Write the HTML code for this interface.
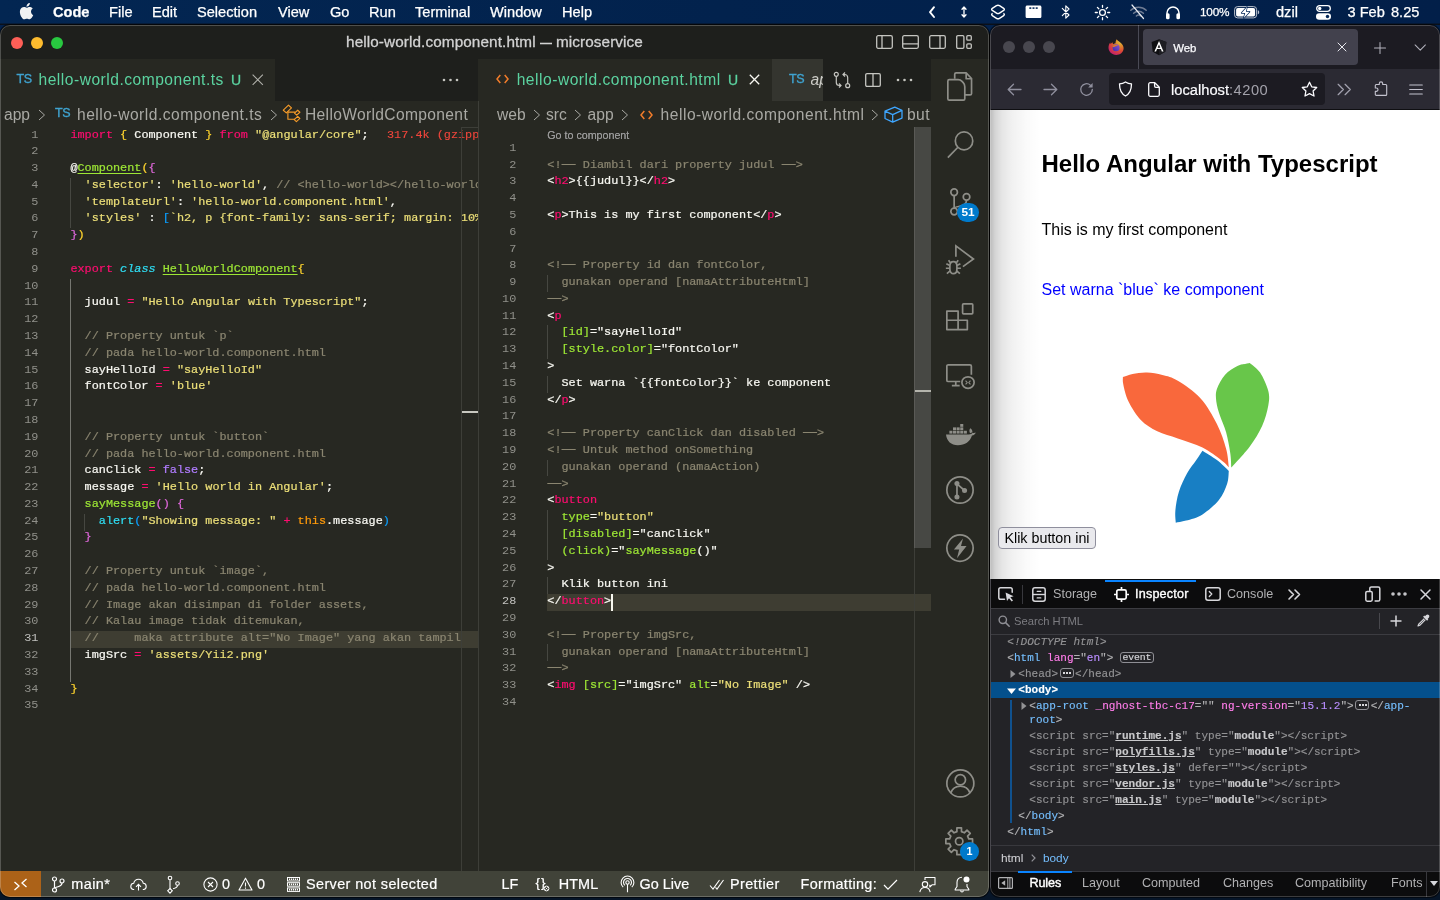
<!DOCTYPE html>
<html lang="en">
<head>
<meta charset="utf-8">
<title>hello-world.component.html — microservice</title>
<style>
*{box-sizing:border-box}
html,body{margin:0;padding:0}
body{width:1440px;height:900px;overflow:hidden;position:relative;background:#061528;font-family:"Liberation Sans",sans-serif;color:#fff}
.abs{position:absolute}
#menubar,#vsc,#ff{will-change:transform}
svg{display:block;overflow:visible}
/* ---------- menubar ---------- */
#menubar{position:absolute;left:0;top:0;width:1440px;height:25px;background:linear-gradient(rgba(0,0,0,0) 0,rgba(0,0,0,0) 23px,rgba(10,12,18,.8) 24px,#0d0f14 25px),linear-gradient(90deg,#032652 0,#02224d 50%,#021f49 100%)}
#menubar .mi{position:absolute;top:0;height:24px;line-height:24px;font-size:14.6px;color:#fff;white-space:pre;-webkit-text-stroke:.25px}
#menubar .mi.b{font-weight:700}
/* ---------- vscode ---------- */
#vsc{position:absolute;left:0;top:25px;width:989px;height:871.500px;background:#272822;border-radius:10px;overflow:hidden;box-shadow:0 0 0 1px rgba(0,0,0,.6)}
#vsc .frame{position:absolute;inset:0;border-radius:10px;border:1px solid rgba(255,255,255,.22);pointer-events:none;z-index:50}
#titlebar{position:absolute;left:0;top:0;width:989px;height:34px;background:#1e1f1c}
#titlebar .tl{position:absolute;top:12px;width:12px;height:12px;border-radius:50%}
#titlebar .title{position:absolute;left:0;width:989px;top:0;height:34px;line-height:34px;text-align:center;font-size:15.3px;color:#d2d2d2;white-space:pre;letter-spacing:.1px;-webkit-text-stroke:.3px}
.tabs{position:absolute;top:34px;height:42px;background:#1e1f1c;overflow:hidden}
.tab{position:absolute;top:0;height:42px;background:#272822}
.tab.inact{background:#34352f}
.tlabel{position:absolute;top:0;height:42px;line-height:42px;font-size:15.6px;letter-spacing:.5px;white-space:pre;color:#5bd3a0}
.bc{position:absolute;top:76px;height:25px;background:#272822;overflow:hidden}
.bc span{position:absolute;top:0;height:26px;line-height:27px;font-size:15.6px;color:#a9a9a4;white-space:pre}
.ed{position:absolute;top:0;background:#272822;overflow:hidden;font-family:"Liberation Mono",monospace;font-size:11.83px}
.ln{position:absolute;left:0;height:16.79px;line-height:16.79px;text-align:right;color:#90908a;white-space:pre}
.ln.act{color:#c2c2bf}
.cl{position:absolute;height:16.79px;line-height:16.79px;white-space:pre;color:#f8f8f2;-webkit-text-stroke:.22px}
.k{color:#fc0d6f}.s{color:#ecdf78}.c{color:#8a8570}.g{color:#9de635}.b{color:#2fdcf2}.p{color:#b07cff}.o{color:#ff9a0a}
.i{font-style:italic}.u{text-decoration:underline;text-underline-offset:2px}
.by{color:#ffd42e}.bp{color:#e068dc}.bb{color:#0a9fff}
.ic{color:#f2463c;margin-left:18.4px;-webkit-text-stroke:.1px}
.lg{color:transparent;-webkit-text-stroke:0;text-decoration:line-through;text-decoration-color:#8a8570;text-decoration-thickness:1.300px}
.guide{position:absolute;width:1px;background:#464741}
.hl{position:absolute;height:16.79px;background:#3e3d32}
/* ---------- status bar ---------- */
#status{position:absolute;left:0;top:846px;width:989px;height:27px;background:#414339}
#status span{position:absolute;top:0;height:26px;line-height:26px;font-size:15.6px;color:#fff;white-space:pre;-webkit-text-stroke:.2px}
/* ---------- firefox ---------- */
#ff{position:absolute;left:990px;top:25px;width:450px;height:871.500px;background:#1c1b22;border-radius:10px;overflow:hidden;box-shadow:0 0 0 1px rgba(0,0,0,.55)}
#ffi{position:absolute;left:1px;top:0;width:450px;height:876px}
#ff .frame{position:absolute;inset:0;border-radius:10px;border:1px solid rgba(255,255,255,.2);pointer-events:none;z-index:50}
</style>
</head>
<body>
<!-- ================= MENUBAR ================= -->
<div id="menubar">
<svg class="abs" style="left:19.500px;top:2.600px" width="13.500" height="16.300" viewBox="3 0 18.6 24"><path fill="#f2f2f2" d="M12.152 6.896c-.948 0-2.415-1.078-3.96-1.04-2.04.027-3.91 1.183-4.961 3.014-2.117 3.675-.546 9.103 1.519 12.09 1.013 1.454 2.208 3.09 3.792 3.039 1.52-.065 2.09-.987 3.935-.987 1.831 0 2.35.987 3.96.948 1.637-.026 2.676-1.48 3.676-2.948 1.156-1.688 1.636-3.325 1.662-3.415-.039-.013-3.182-1.221-3.22-4.857-.026-3.04 2.48-4.494 2.597-4.559-1.429-2.09-3.623-2.324-4.39-2.376-2-.156-3.675 1.09-4.61 1.09zM15.53 3.83c.843-1.012 1.4-2.427 1.245-3.83-1.207.052-2.662.805-3.532 1.818-.78.896-1.454 2.338-1.273 3.714 1.338.104 2.715-.688 3.559-1.701"/></svg>
<span class="mi b" style="left:53px">Code</span>
<span class="mi" style="left:109px">File</span>
<span class="mi" style="left:152px">Edit</span>
<span class="mi" style="left:197px">Selection</span>
<span class="mi" style="left:278px">View</span>
<span class="mi" style="left:330px">Go</span>
<span class="mi" style="left:369px">Run</span>
<span class="mi" style="left:415px">Terminal</span>
<span class="mi" style="left:490px">Window</span>
<span class="mi" style="left:562px">Help</span>
<!-- right status icons -->
<svg class="abs" style="left:927px;top:5px" width="10" height="14" viewBox="0 0 10 14"><path d="M7 2.200 3 7.100l4 4.900" fill="none" stroke="#fff" stroke-width="1.900" stroke-linecap="round" stroke-linejoin="round"/></svg>
<svg class="abs" style="left:959px;top:5px" width="10" height="14" viewBox="0 0 10 14"><path d="M5 2.200v9.600M3 4.300 5 2l2 2.300M3 9.700 5 12l2-2.300" fill="none" stroke="#fff" stroke-width="1.300" stroke-linecap="round" stroke-linejoin="round"/></svg>
<svg class="abs" style="left:990px;top:4px" width="16" height="17" viewBox="0 0 16 17"><path d="M8 1.2c.5 0 1 .2 1.500.5l4.200 2.700c.9.600.9 1.400 0 2L9.500 9.100c-.9.600-2.100.600-3 0L2.300 6.400c-.9-.6-.9-1.400 0-2l4.200-2.700C7 1.400 7.500 1.200 8 1.200zM2.600 9.400l-.300.200c-.9.600-.9 1.400 0 2l4.200 2.700c.9.600 2.100.600 3 0l4.200-2.700c.9-.6.9-1.400 0-2l-.3-.2" fill="none" stroke="#fff" stroke-width="1.4" stroke-linejoin="round"/></svg>
<svg class="abs" style="left:1025px;top:5px" width="17" height="14" viewBox="0 0 17 14"><path d="M2.200.6h12.600c.9 0 1.600.7 1.600 1.600v9.200c0 .9-.7 1.600-1.600 1.600H2.200C1.300 13 .6 12.300.6 11.400V2.200C.6 1.300 1.300.6 2.200.6z" fill="#fff"/><rect x="4.300" y="2.300" width="2" height="1.600" fill="#06295a"/><rect x="7.500" y="2.300" width="2" height="1.600" fill="#06295a"/><rect x="10.700" y="2.300" width="2" height="1.600" fill="#06295a"/></svg>
<svg class="abs" style="left:1061px;top:4px" width="10" height="16" viewBox="0 0 10 16"><path d="M1.300 4.400 8 11 4.800 14.200V1.800L8 5 1.300 11.600" fill="none" stroke="#fff" stroke-width="1.1" stroke-linejoin="round" stroke-linecap="round"/></svg>
<svg class="abs" style="left:1094px;top:4px" width="17" height="17" viewBox="0 0 17 17"><circle cx="8.500" cy="8.500" r="2.900" fill="none" stroke="#fff" stroke-width="1.300"/><path d="M8.500 1.300v2M8.500 13.700v2M1.300 8.500h2M13.700 8.500h2M3.400 3.400l1.400 1.400M12.200 12.200l1.400 1.400M3.400 13.600l1.400-1.400M12.200 4.800l1.400-1.400" stroke="#fff" stroke-width="1.300" stroke-linecap="round"/></svg>
<svg class="abs" style="left:1129px;top:4px" width="19" height="16" viewBox="0 0 19 16"><g fill="none" stroke="#6e7b93" stroke-width="1.500" stroke-linecap="round"><path d="M1.800 6.300c4.300-4 11.100-4 15.400 0"/><path d="M4.600 9.200c2.800-2.600 7-2.600 9.800 0"/><path d="M7.400 12c1.200-1.100 3-1.100 4.200 0"/></g><path d="M3 1l11.500 13.500" stroke="#e9ecf2" stroke-width="1.200" stroke-linecap="round"/></svg>
<svg class="abs" style="left:1165px;top:5px" width="16" height="15" viewBox="0 0 16 15"><path d="M2 11.500V8a6 6 0 0 1 12 0v3.500" fill="none" stroke="#fff" stroke-width="1.500"/><rect x="1" y="8.300" width="3.600" height="6" rx="1.500" fill="#fff"/><rect x="11.400" y="8.300" width="3.600" height="6" rx="1.500" fill="#fff"/></svg>
<span class="mi" style="left:1200px;font-size:11.8px;letter-spacing:-.2px">100%</span>
<svg class="abs" style="left:1234px;top:6px" width="26" height="13" viewBox="0 0 26 13"><rect x=".6" y=".6" width="22" height="11.300" rx="3" fill="none" stroke="#b9c0cd" stroke-width="1"/><rect x="2.100" y="2.100" width="19" height="8.300" rx="1.700" fill="#fff"/><path d="M23.800 4.300c1 .3 1.400 1.100 1.400 2s-.4 1.700-1.400 2z" fill="#b9c0cd"/><path d="M13 1 7.600 7h3.600L9.800 12l5.800-6.300h-3.700z" fill="#06295a" stroke="#06295a" stroke-width="1.400" stroke-linejoin="round"/><path d="M13 1 7.600 7h3.600L9.800 12l5.800-6.300h-3.700z" fill="#fff"/></svg>
<span class="mi" style="left:1276px">dzil</span>
<svg class="abs" style="left:1316px;top:5px" width="15" height="15" viewBox="0 0 15 15"><rect x=".7" y=".7" width="13.600" height="5.600" rx="2.800" fill="none" stroke="#fff" stroke-width="1.300"/><circle cx="3.700" cy="3.500" r="1.700" fill="#fff"/><rect x="0" y="8.300" width="15" height="6.400" rx="3.200" fill="#fff"/><circle cx="11.500" cy="11.500" r="1.700" fill="#06295a"/></svg>
<span class="mi" style="left:1347.5px">3 Feb</span>
<span class="mi" style="left:1391px">8.25</span>

</div>

<div class="abs" style="left:0;top:25px;width:1440px;height:12px;background:#03214b"></div>
<!-- ================= VS CODE ================= -->
<div id="vsc">
<div id="titlebar">
  <div class="tl" style="left:11px;background:#fe5f57"></div>
  <div class="tl" style="left:31px;background:#febc2e"></div>
  <div class="tl" style="left:51px;background:#28c840"></div>
  <div class="title">hello-world.component.html <span style="display:inline-block;width:11.500px;overflow:hidden;vertical-align:bottom">—</span> microservice</div>
<svg class="abs" style="left:876px;top:10px" width="17" height="14" viewBox="0 0 17 14"><rect x=".7" y=".7" width="15.600" height="12.600" rx="1.500" fill="none" stroke="#c5c5c0" stroke-width="1.300"/><path d="M6 .7v12.600" stroke="#c5c5c0" stroke-width="1.300"/></svg>
<svg class="abs" style="left:902px;top:10px" width="17" height="14" viewBox="0 0 17 14"><rect x=".7" y=".7" width="15.600" height="12.600" rx="1.500" fill="none" stroke="#c5c5c0" stroke-width="1.300"/><path d="M.7 8.800h15.600" stroke="#c5c5c0" stroke-width="1.300"/></svg>
<svg class="abs" style="left:929px;top:10px" width="17" height="14" viewBox="0 0 17 14"><rect x=".7" y=".7" width="15.600" height="12.600" rx="1.500" fill="none" stroke="#c5c5c0" stroke-width="1.300"/><path d="M11 .7v12.600" stroke="#c5c5c0" stroke-width="1.300"/></svg>
<svg class="abs" style="left:956px;top:10px" width="16" height="14" viewBox="0 0 16 14"><rect x=".7" y=".7" width="7.200" height="12.600" rx="1.200" fill="none" stroke="#c5c5c0" stroke-width="1.300"/><rect x="10.800" y=".7" width="4.500" height="4.500" rx="1" fill="none" stroke="#c5c5c0" stroke-width="1.300"/><rect x="10.800" y="8.800" width="4.500" height="4.500" rx="1" fill="none" stroke="#c5c5c0" stroke-width="1.300"/></svg>

</div>

<!-- left group -->
<div class="tabs" style="left:0;width:478px">
  <div class="tab" style="left:0;width:275px"></div>
<span class="abs" style="left:16.500px;top:0;height:42px;line-height:40px;font-size:12.500px;font-weight:400;-webkit-text-stroke:.35px;color:#3fa3d0;letter-spacing:-.3px">TS</span>
<span class="tlabel" style="left:38.500px">hello-world.component.ts</span>
<span class="tlabel" style="left:231px;letter-spacing:0;font-size:14px;font-weight:400;-webkit-text-stroke:.3px;line-height:42px">U</span>
<svg class="abs" style="left:252px;top:14.500px" width="11.500" height="11.500" viewBox="0 0 11 11"><path d="M.6.600l9.800 9.800M10.400.6.600 10.400" stroke="#b0b0aa" stroke-width="1.050"/></svg>
<svg class="abs" style="left:442px;top:19px" width="17" height="4" viewBox="0 0 17 4"><circle cx="2" cy="2" r="1.300" fill="#c5c5c0"/><circle cx="8.500" cy="2" r="1.300" fill="#c5c5c0"/><circle cx="15" cy="2" r="1.300" fill="#c5c5c0"/></svg>

</div>
<div class="bc" style="left:0;width:478px">
<span style="left:4px">app</span>
<svg class="abs" style="left:38px;top:8px" width="8" height="12" viewBox="0 0 8 12"><path d="M1 1l5.500 5L1 11" fill="none" stroke="#a9a9a4" stroke-width="1"/></svg>
<span style="left:55px;font-size:12.500px;font-weight:400;-webkit-text-stroke:.35px;color:#3fa3d0;letter-spacing:-.3px;line-height:25px">TS</span>
<span style="left:77px;letter-spacing:.5px">hello-world.component.ts</span>
<svg class="abs" style="left:270px;top:8px" width="8" height="12" viewBox="0 0 8 12"><path d="M1 1l5.500 5L1 11" fill="none" stroke="#a9a9a4" stroke-width="1"/></svg>
<svg class="abs" style="left:270px;top:-1px" width="60" height="30" viewBox="0 0 60 30"><g fill="none" stroke="#f59a28" stroke-width="1.150" stroke-linejoin="round"><path d="M18.500 5.200l3 2.700-5.200 5-3-2.700z"/><path d="M27.700 10.200l2.200 2-3.200 2.900-2.200-2z"/><path d="M27.700 16.400l2.200 2-3.500 3.200-2.200-2z"/><path d="M17.900 11.300v7.900h7M18 12.100h7.300"/></g></svg>
<span style="left:305px;letter-spacing:.34px">HelloWorldComponent</span>

</div>
<div class="ed" id="edL" style="left:0;top:100px;width:478px;height:746px">
<div class="hl" style="left:70px;top:506.30px;width:408px"></div>
<div class="guide" style="left:70px;top:52.97px;height:50.37px;background:#464741"></div>
<div class="guide" style="left:70px;top:153.71px;height:402.96px;background:#767771"></div>
<div class="guide" style="left:84px;top:388.77px;height:16.79px;background:#464741"></div>
<div class="ln" style="top:1.50px;width:38.4px">1</div>
<div class="cl" style="top:1.50px;left:70.4px"><span class="k">import</span> <span class="by">{</span> Component <span class="by">}</span> <span class="k">from</span> <span class="s">"@angular/core"</span>;<span class="ic">317.4k (gzipp</span></div>
<div class="ln" style="top:18.29px;width:38.4px">2</div>
<div class="ln" style="top:35.08px;width:38.4px">3</div>
<div class="cl" style="top:35.08px;left:70.4px">@<span class="g u">Component</span><span class="by">(</span><span class="bp">{</span></div>
<div class="ln" style="top:51.87px;width:38.4px">4</div>
<div class="cl" style="top:51.87px;left:70.4px">  <span class="s">'selector'</span>: <span class="s">'hello-world'</span>, <span class="c">// &lt;hello-world&gt;&lt;/hello-world</span></div>
<div class="ln" style="top:68.66px;width:38.4px">5</div>
<div class="cl" style="top:68.66px;left:70.4px">  <span class="s">'templateUrl'</span>: <span class="s">'hello-world.component.html'</span>,</div>
<div class="ln" style="top:85.45px;width:38.4px">6</div>
<div class="cl" style="top:85.45px;left:70.4px">  <span class="s">'styles'</span> : <span class="bb">[</span><span class="s">`h2, p {font-family: sans-serif; margin: 10%</span></div>
<div class="ln" style="top:102.24px;width:38.4px">7</div>
<div class="cl" style="top:102.24px;left:70.4px"><span class="bp">}</span><span class="by">)</span></div>
<div class="ln" style="top:119.03px;width:38.4px">8</div>
<div class="ln" style="top:135.82px;width:38.4px">9</div>
<div class="cl" style="top:135.82px;left:70.4px"><span class="k">export</span> <span class="b i">class</span> <span class="g u">HelloWorldComponent</span><span class="by">{</span></div>
<div class="ln" style="top:152.61px;width:38.4px">10</div>
<div class="ln" style="top:169.40px;width:38.4px">11</div>
<div class="cl" style="top:169.40px;left:70.4px">  judul <span class="k">=</span> <span class="s">"Hello Angular with Typescript"</span>;</div>
<div class="ln" style="top:186.19px;width:38.4px">12</div>
<div class="ln" style="top:202.98px;width:38.4px">13</div>
<div class="cl" style="top:202.98px;left:70.4px">  <span class="c">// Property untuk `p`</span></div>
<div class="ln" style="top:219.77px;width:38.4px">14</div>
<div class="cl" style="top:219.77px;left:70.4px">  <span class="c">// pada hello-world.component.html</span></div>
<div class="ln" style="top:236.56px;width:38.4px">15</div>
<div class="cl" style="top:236.56px;left:70.4px">  sayHelloId <span class="k">=</span> <span class="s">"sayHelloId"</span></div>
<div class="ln" style="top:253.35px;width:38.4px">16</div>
<div class="cl" style="top:253.35px;left:70.4px">  fontColor <span class="k">=</span> <span class="s">'blue'</span></div>
<div class="ln" style="top:270.14px;width:38.4px">17</div>
<div class="ln" style="top:286.93px;width:38.4px">18</div>
<div class="ln" style="top:303.72px;width:38.4px">19</div>
<div class="cl" style="top:303.72px;left:70.4px">  <span class="c">// Property untuk `button`</span></div>
<div class="ln" style="top:320.51px;width:38.4px">20</div>
<div class="cl" style="top:320.51px;left:70.4px">  <span class="c">// pada hello-world.component.html</span></div>
<div class="ln" style="top:337.30px;width:38.4px">21</div>
<div class="cl" style="top:337.30px;left:70.4px">  canClick <span class="k">=</span> <span class="p">false</span>;</div>
<div class="ln" style="top:354.09px;width:38.4px">22</div>
<div class="cl" style="top:354.09px;left:70.4px">  message <span class="k">=</span> <span class="s">'Hello world in Angular'</span>;</div>
<div class="ln" style="top:370.88px;width:38.4px">23</div>
<div class="cl" style="top:370.88px;left:70.4px">  <span class="g">sayMessage</span><span class="bp">()</span> <span class="bp">{</span></div>
<div class="ln" style="top:387.67px;width:38.4px">24</div>
<div class="cl" style="top:387.67px;left:70.4px">    <span class="b">alert</span><span class="bb">(</span><span class="s">"Showing message: "</span> <span class="k">+</span> <span class="o">this</span>.message<span class="bb">)</span></div>
<div class="ln" style="top:404.46px;width:38.4px">25</div>
<div class="cl" style="top:404.46px;left:70.4px">  <span class="bp">}</span></div>
<div class="ln" style="top:421.25px;width:38.4px">26</div>
<div class="ln" style="top:438.04px;width:38.4px">27</div>
<div class="cl" style="top:438.04px;left:70.4px">  <span class="c">// Property untuk `image`,</span></div>
<div class="ln" style="top:454.83px;width:38.4px">28</div>
<div class="cl" style="top:454.83px;left:70.4px">  <span class="c">// pada hello-world.component.html</span></div>
<div class="ln" style="top:471.62px;width:38.4px">29</div>
<div class="cl" style="top:471.62px;left:70.4px">  <span class="c">// Image akan disimpan di folder assets,</span></div>
<div class="ln" style="top:488.41px;width:38.4px">30</div>
<div class="cl" style="top:488.41px;left:70.4px">  <span class="c">// Kalau image tidak ditemukan,</span></div>
<div class="ln act" style="top:505.20px;width:38.4px">31</div>
<div class="cl" style="top:505.20px;left:70.4px">  <span class="c">//     maka attribute alt="No Image" yang akan tampil</span></div>
<div class="ln" style="top:521.99px;width:38.4px">32</div>
<div class="cl" style="top:521.99px;left:70.4px">  imgSrc <span class="k">=</span> <span class="s">'assets/Yii2.png'</span></div>
<div class="ln" style="top:538.78px;width:38.4px">33</div>
<div class="ln" style="top:555.57px;width:38.4px">34</div>
<div class="cl" style="top:555.57px;left:70.4px"><span class="by">}</span></div>
<div class="ln" style="top:572.36px;width:38.4px">35</div>
<div class="abs" style="left:461px;top:2px;width:17px;height:1px;background:#3d3e38"></div>
<div class="abs" style="left:461px;top:2px;width:1px;height:744px;background:#3d3e38"></div>
<div class="abs" style="left:462px;top:286px;width:16px;height:2px;background:#c8c8c0"></div>
</div>

<!-- right group -->
<div class="abs" style="left:478px;top:34px;width:2px;height:42px;background:#272822"></div>
<div class="abs" style="left:478px;top:76px;width:1px;height:770px;background:#3d3e38"></div>
<div class="tabs" style="left:479px;width:452px">
  <div class="tab" style="left:0;width:293px"></div>
  <div class="tab inact" style="left:293px;width:51px"></div>
<svg class="abs" style="left:16.500px;top:15px" width="13" height="10" viewBox="0 0 13 10"><path d="M4.300 1 1 5l3.300 4M8.700 1 12 5l-3.300 4" fill="none" stroke="#f07c2a" stroke-width="1.500"/></svg>
<span class="tlabel" style="left:37.700px;letter-spacing:.51px">hello-world.component.html</span>
<span class="tlabel" style="left:249px;letter-spacing:0;font-size:14px;font-weight:400;-webkit-text-stroke:.3px;line-height:42px">U</span>
<svg class="abs" style="left:269.500px;top:15px" width="11" height="11" viewBox="0 0 11 11"><path d="M.8.800l9.400 9.400M10.200.8.800 10.200" stroke="#f8f8f2" stroke-width="1.300"/></svg>
<span class="abs" style="left:310px;top:0;height:42px;line-height:40px;font-size:12.500px;font-weight:400;-webkit-text-stroke:.35px;color:#3fa3d0;letter-spacing:-.3px">TS</span>
<span class="abs" style="left:331.500px;top:0;width:12.500px;overflow:hidden;height:42px;line-height:42px;font-size:15.600px;font-style:italic;color:#ccccc7;white-space:pre">ap</span>
<div class="abs" style="left:344px;top:0;width:108px;height:42px;background:#1e1f1c"></div>
<svg class="abs" style="left:354px;top:12px" width="18" height="18" viewBox="0 0 18 18"><g fill="none" stroke="#c5c5c0" stroke-width="1.200"><circle cx="3.300" cy="3.300" r="2"/><circle cx="14.700" cy="14.700" r="2"/><path d="M3.300 5.300v6.200c0 1.800 1.200 3 3 3h1.500M6 12.500l2 2-2 2M14.700 12.700V6.500c0-1.800-1.200-3-3-3h-1.500M12 5.500l-2-2 2-2"/></g></svg>
<svg class="abs" style="left:386px;top:14px" width="16" height="14" viewBox="0 0 16 14"><rect x=".7" y=".7" width="14.600" height="12.600" rx="1.300" fill="none" stroke="#c5c5c0" stroke-width="1.300"/><path d="M8 .7v12.600" stroke="#c5c5c0" stroke-width="1.300"/></svg>
<svg class="abs" style="left:417px;top:19px" width="17" height="4" viewBox="0 0 17 4"><circle cx="2" cy="2" r="1.300" fill="#c5c5c0"/><circle cx="8.500" cy="2" r="1.300" fill="#c5c5c0"/><circle cx="15" cy="2" r="1.300" fill="#c5c5c0"/></svg>

</div>
<div class="bc" style="left:479px;width:452px">
<span style="left:18px">web</span>
<svg class="abs" style="left:54px;top:8px" width="8" height="12" viewBox="0 0 8 12"><path d="M1 1l5.500 5L1 11" fill="none" stroke="#a9a9a4" stroke-width="1"/></svg>
<span style="left:67px">src</span>
<svg class="abs" style="left:95px;top:8px" width="8" height="12" viewBox="0 0 8 12"><path d="M1 1l5.500 5L1 11" fill="none" stroke="#a9a9a4" stroke-width="1"/></svg>
<span style="left:108.600px">app</span>
<svg class="abs" style="left:142px;top:8px" width="8" height="12" viewBox="0 0 8 12"><path d="M1 1l5.500 5L1 11" fill="none" stroke="#a9a9a4" stroke-width="1"/></svg>
<svg class="abs" style="left:161px;top:8.500px" width="13" height="10" viewBox="0 0 13 10"><path d="M4.300 1 1 5l3.300 4M8.700 1 12 5l-3.300 4" fill="none" stroke="#f07c2a" stroke-width="1.500"/></svg>
<span style="left:181.600px;letter-spacing:.51px">hello-world.component.html</span>
<svg class="abs" style="left:392px;top:8px" width="8" height="12" viewBox="0 0 8 12"><path d="M1 1l5.500 5L1 11" fill="none" stroke="#a9a9a4" stroke-width="1"/></svg>
<svg class="abs" style="left:405px;top:5px" width="19" height="17" viewBox="0 0 19 17"><path d="M1 5.200 10.800 1.200 18 4.300v7.800l-9.300 4L1 12.500zM1 5.200l7.700 3.400L18 4.300M8.700 8.600v7.500" fill="none" stroke="#3ea6ff" stroke-width="1.300" stroke-linejoin="round"/></svg>
<span style="left:428px;letter-spacing:.4px">but</span>

</div>
<div class="ed" id="edR" style="left:480px;top:100px;width:451px;height:746px">
<div class="hl" style="left:67px;top:469.03px;width:384px"></div>
<div class="guide" style="left:67px;top:150.02px;height:16.79px;background:#464741"></div>
<div class="guide" style="left:67px;top:200.39px;height:33.58px;background:#464741"></div>
<div class="guide" style="left:67px;top:250.76px;height:16.79px;background:#464741"></div>
<div class="guide" style="left:67px;top:334.71px;height:16.79px;background:#464741"></div>
<div class="guide" style="left:67px;top:385.08px;height:50.37px;background:#464741"></div>
<div class="guide" style="left:67px;top:452.24px;height:16.79px;background:#464741"></div>
<div class="guide" style="left:67px;top:519.40px;height:16.79px;background:#464741"></div>
<div class="abs" style="left:67.300px;top:3px;height:14px;line-height:14px;text-shadow:0 0 .4px #999;font-family:'Liberation Sans',sans-serif;font-size:10.700px;color:#999999;white-space:pre">Go to component</div>
<div class="ln" style="top:14.80px;width:36.3px">1</div>
<div class="ln" style="top:31.59px;width:36.3px">2</div>
<div class="cl" style="top:31.59px;left:67.3px"><span class="c">&lt;!<span class="lg">--</span> Diambil dari property judul <span class="lg">--</span>&gt;</span></div>
<div class="ln" style="top:48.38px;width:36.3px">3</div>
<div class="cl" style="top:48.38px;left:67.3px">&lt;<span class="k">h2</span>&gt;{{judul}}&lt;/<span class="k">h2</span>&gt;</div>
<div class="ln" style="top:65.17px;width:36.3px">4</div>
<div class="ln" style="top:81.96px;width:36.3px">5</div>
<div class="cl" style="top:81.96px;left:67.3px">&lt;<span class="k">p</span>&gt;This is my first component&lt;/<span class="k">p</span>&gt;</div>
<div class="ln" style="top:98.75px;width:36.3px">6</div>
<div class="ln" style="top:115.54px;width:36.3px">7</div>
<div class="ln" style="top:132.33px;width:36.3px">8</div>
<div class="cl" style="top:132.33px;left:67.3px"><span class="c">&lt;!<span class="lg">--</span> Property id dan fontColor,</span></div>
<div class="ln" style="top:149.12px;width:36.3px">9</div>
<div class="cl" style="top:149.12px;left:67.3px"><span class="c">  gunakan operand [namaAttributeHtml]</span></div>
<div class="ln" style="top:165.91px;width:36.3px">10</div>
<div class="cl" style="top:165.91px;left:67.3px"><span class="c"><span class="lg">--</span>&gt;</span></div>
<div class="ln" style="top:182.70px;width:36.3px">11</div>
<div class="cl" style="top:182.70px;left:67.3px">&lt;<span class="k">p</span></div>
<div class="ln" style="top:199.49px;width:36.3px">12</div>
<div class="cl" style="top:199.49px;left:67.3px">  <span class="g">[id]</span>="sayHelloId"</div>
<div class="ln" style="top:216.28px;width:36.3px">13</div>
<div class="cl" style="top:216.28px;left:67.3px">  <span class="g">[style.color]</span>="fontColor"</div>
<div class="ln" style="top:233.07px;width:36.3px">14</div>
<div class="cl" style="top:233.07px;left:67.3px">&gt;</div>
<div class="ln" style="top:249.86px;width:36.3px">15</div>
<div class="cl" style="top:249.86px;left:67.3px">  Set warna `{{fontColor}}` ke component</div>
<div class="ln" style="top:266.65px;width:36.3px">16</div>
<div class="cl" style="top:266.65px;left:67.3px">&lt;/<span class="k">p</span>&gt;</div>
<div class="ln" style="top:283.44px;width:36.3px">17</div>
<div class="ln" style="top:300.23px;width:36.3px">18</div>
<div class="cl" style="top:300.23px;left:67.3px"><span class="c">&lt;!<span class="lg">--</span> Property canClick dan disabled <span class="lg">--</span>&gt;</span></div>
<div class="ln" style="top:317.02px;width:36.3px">19</div>
<div class="cl" style="top:317.02px;left:67.3px"><span class="c">&lt;!<span class="lg">--</span> Untuk method onSomething</span></div>
<div class="ln" style="top:333.81px;width:36.3px">20</div>
<div class="cl" style="top:333.81px;left:67.3px"><span class="c">  gunakan operand (namaAction)</span></div>
<div class="ln" style="top:350.60px;width:36.3px">21</div>
<div class="cl" style="top:350.60px;left:67.3px"><span class="c"><span class="lg">--</span>&gt;</span></div>
<div class="ln" style="top:367.39px;width:36.3px">22</div>
<div class="cl" style="top:367.39px;left:67.3px">&lt;<span class="k">button</span></div>
<div class="ln" style="top:384.18px;width:36.3px">23</div>
<div class="cl" style="top:384.18px;left:67.3px">  <span class="g">type</span>=<span class="s">"button"</span></div>
<div class="ln" style="top:400.97px;width:36.3px">24</div>
<div class="cl" style="top:400.97px;left:67.3px">  <span class="g">[disabled]</span>="canClick"</div>
<div class="ln" style="top:417.76px;width:36.3px">25</div>
<div class="cl" style="top:417.76px;left:67.3px">  <span class="g">(click)</span>="<span class="g">sayMessage</span>()"</div>
<div class="ln" style="top:434.55px;width:36.3px">26</div>
<div class="cl" style="top:434.55px;left:67.3px">&gt;</div>
<div class="ln" style="top:451.34px;width:36.3px">27</div>
<div class="cl" style="top:451.34px;left:67.3px">  Klik button ini</div>
<div class="ln act" style="top:468.13px;width:36.3px">28</div>
<div class="cl" style="top:468.13px;left:67.3px">&lt;/<span class="k">button</span>&gt;</div>
<div class="ln" style="top:484.92px;width:36.3px">29</div>
<div class="ln" style="top:501.71px;width:36.3px">30</div>
<div class="cl" style="top:501.71px;left:67.3px"><span class="c">&lt;!<span class="lg">--</span> Property imgSrc,</span></div>
<div class="ln" style="top:518.50px;width:36.3px">31</div>
<div class="cl" style="top:518.50px;left:67.3px"><span class="c">  gunakan operand [namaAttributeHtml]</span></div>
<div class="ln" style="top:535.29px;width:36.3px">32</div>
<div class="cl" style="top:535.29px;left:67.3px"><span class="c"><span class="lg">--</span>&gt;</span></div>
<div class="ln" style="top:552.08px;width:36.3px">33</div>
<div class="cl" style="top:552.08px;left:67.3px">&lt;<span class="k">img</span> <span class="g">[src]</span>="imgSrc" <span class="g">alt</span>=<span class="s">"No Image"</span> /&gt;</div>
<div class="ln" style="top:568.87px;width:36.3px">34</div>
<div class="abs" style="left:434px;top:2px;width:1px;height:744px;background:#3d3e38"></div>
<div class="abs" style="left:434px;top:2px;width:17px;height:421px;background:rgba(121,121,121,.4)"></div>
<div class="abs" style="left:434px;top:2px;width:1px;height:421px;background:#5a5a56"></div>
<div class="abs" style="left:435px;top:265px;width:16px;height:2px;background:#b4b4ac"></div>
<div class="abs" style="left:131px;top:469.03px;width:2px;height:17px;background:#f8f8f0"></div>
</div>

<!-- activity bar -->
<div id="act" class="abs" style="left:931px;top:34px;width:58px;height:812px;background:#272822">
<style>
#act svg{position:absolute}
#act .bd{position:absolute;border-radius:9px;background:#007acc;color:#fff;font-size:10.800px;font-weight:700;text-align:center}
</style>
<!-- explorer --><svg style="left:15.8px;top:13.0px" width="25.4" height="29.0" viewBox="2.76 1.86 22.18 24.18" preserveAspectRatio="none"><g fill="none" stroke="#8e8e88" stroke-width="1.7" vector-effect="non-scaling-stroke" stroke-linejoin="round"><path vector-effect="non-scaling-stroke" d="M9.500 7.500V3.800c0-.7.500-1.200 1.200-1.200h8.800l4.700 4.700v12.500c0 .7-.5 1.200-1.200 1.200h-4.800"/><path vector-effect="non-scaling-stroke" d="M19.500 2.800v4.700h4.500"/><path vector-effect="non-scaling-stroke" d="M4.700 8.300h7.800c1.300 0 2.500.5 3.400 1.400l1 1c.9.900 1.400 2.100 1.400 3.400v10c0 .7-.5 1.200-1.200 1.200H4.700c-.7 0-1.200-.5-1.200-1.200V9.500c0-.7.500-1.200 1.200-1.200z"/></g></svg>
<!-- search --><svg style="left:16.4px;top:71.9px" width="26.6" height="27.5" viewBox="1.74 1.94 23.82 23.82" preserveAspectRatio="none"><g fill="none" stroke="#8e8e88" stroke-width="1.7" stroke-linecap="butt"><circle vector-effect="non-scaling-stroke" cx="17" cy="10.500" r="7.800"/><path vector-effect="non-scaling-stroke" d="M11.500 16 2.500 25"/></g></svg>
<!-- scm --><svg style="left:18.6px;top:128.5px" width="20.7" height="27.7" viewBox="3.98 1.48 20.05 26.55" preserveAspectRatio="none"><g fill="none" stroke="#8e8e88" stroke-width="1.7"><circle vector-effect="non-scaling-stroke" cx="8" cy="5.500" r="3.200"/><circle vector-effect="non-scaling-stroke" cx="8" cy="24" r="3.200"/><circle vector-effect="non-scaling-stroke" cx="20" cy="10" r="3.200"/><path vector-effect="non-scaling-stroke" d="M8 8.700v12.100M20 13.200c0 4.300-3.500 5.300-7.500 6-2.700.5-4.500.9-4.500 1.600"/></g></svg>
<!-- debug --><svg style="left:14.0px;top:186.0px" width="29.3" height="29.6" viewBox="-0.35 1.15 29.19 27.19" preserveAspectRatio="none"><g fill="none" stroke="#8e8e88" stroke-width="1.7" stroke-linejoin="miter" stroke-linecap="butt"><path vector-effect="non-scaling-stroke" d="M10.500 12V2l17.500 12-10.500 7"/><path vector-effect="non-scaling-stroke" d="M4.500 20.500c0-2.300 1.500-4 3.500-4s3.500 1.700 3.500 4v3c0 2.300-1.500 4-3.500 4s-3.500-1.700-3.500-4z" stroke-linejoin="round"/><path vector-effect="non-scaling-stroke" d="M4.500 20 1 18.300M11.500 20l3.500-1.700M4.500 22.500H.5M11.500 22.500h4M4.800 25l-3.300 2.500M11.200 25l3.300 2.500M5 17.500l-1.800-2.300M11 17.500l1.800-2.300"/></g></svg>
<!-- ext --><svg style="left:15.0px;top:244.0px" width="27.6" height="27.4" viewBox="1.75 1.75 24.51 24.51" preserveAspectRatio="none"><g fill="none" stroke="#8e8e88" stroke-width="1.7" stroke-linejoin="round"><path vector-effect="non-scaling-stroke" d="M2.500 9h10v16.500h-10zM2.500 17.200h18.200v8.300H2.500M12.500 17.200v8.300"/><rect vector-effect="non-scaling-stroke" x="16.500" y="2.500" width="9" height="9" rx=".8"/></g></svg>
<!-- remote --><svg style="left:15.0px;top:304.5px" width="29.0" height="25.1" viewBox="1.74 2.74 26.03 24.03" preserveAspectRatio="none"><g fill="none" stroke="#8e8e88" stroke-width="1.7" stroke-linejoin="round"><path vector-effect="non-scaling-stroke" d="M14.500 19.500H3.800c-.7 0-1.300-.6-1.300-1.300V4.800c0-.7.600-1.300 1.300-1.300h19.400c.7 0 1.300.6 1.300 1.300v8.200"/><path vector-effect="non-scaling-stroke" d="M7 23.500h7M10.500 19.500v4"/><circle vector-effect="non-scaling-stroke" cx="21.500" cy="20.500" r="5.500"/><path vector-effect="non-scaling-stroke" d="M19.300 18.700l1.500 1.800-1.500 1.800M23.700 18.700l-1.500 1.800 1.500 1.800" stroke-width="1.1"/></g></svg>
<!-- docker --><svg style="left:14.5px;top:365.0px" width="29.7" height="21.2" viewBox="1.00 4.20 26.30 18.80" preserveAspectRatio="none"><g fill="#8e8e88"><path d="M1 13.500h20.300c1.600 0 2.600-.6 3.200-1.500.9.300 2 .3 2.800-.2-.4 1.500-1.600 2.500-3.300 2.700-1.800 5.600-6 8.500-12.500 8.500C5.500 23 1.700 19.500 1 13.500z"/><path d="M22.300 12.300c-.9-1.400-.8-3.200.3-4.300 1.200.8 1.900 2 1.800 3.500z"/><rect x="4" y="10.200" width="2.700" height="2.500"/><rect x="7.200" y="10.200" width="2.700" height="2.500"/><rect x="10.400" y="10.200" width="2.700" height="2.500"/><rect x="13.600" y="10.200" width="2.700" height="2.500"/><rect x="16.800" y="10.200" width="2.700" height="2.500"/><rect x="7.200" y="7.200" width="2.700" height="2.500"/><rect x="10.400" y="7.200" width="2.700" height="2.500"/><rect x="13.600" y="7.200" width="2.700" height="2.500"/><rect x="13.600" y="4.200" width="2.700" height="2.500"/></g></svg>
<!-- gitgraph --><svg style="left:14.5px;top:416.5px" width="28.0" height="28.0" viewBox="0.16 0.16 27.68 27.68" preserveAspectRatio="none"><circle vector-effect="non-scaling-stroke" cx="14" cy="14" r="13" fill="none" stroke="#8e8e88" stroke-width="1.7"/><g fill="#8e8e88"><circle cx="11" cy="7.500" r="2.500"/><circle cx="11" cy="21" r="2.500"/><circle cx="18.500" cy="14.500" r="2.500"/></g><path vector-effect="non-scaling-stroke" d="M11 7.500V21M11 8l7.500 6.500" stroke="#8e8e88" stroke-width="1.7" fill="none"/></svg>
<!-- thunder --><svg style="left:14.5px;top:475.2px" width="28.0" height="28.2" viewBox="0.16 0.16 27.68 27.68" preserveAspectRatio="none"><circle vector-effect="non-scaling-stroke" cx="14" cy="14" r="13" fill="none" stroke="#8e8e88" stroke-width="1.7"/><path d="M17 4.500 8 15.500h5.200l-2.200 8.500 9.500-12h-5.500z" fill="#8e8e88"/></svg>
<!-- account --><svg style="left:14.7px;top:710.4px" width="28.7" height="28.8" viewBox="0.18 0.18 27.64 27.64" preserveAspectRatio="none"><g fill="none" stroke="#8e8e88" stroke-width="1.7"><circle vector-effect="non-scaling-stroke" cx="14" cy="14" r="13"/><circle vector-effect="non-scaling-stroke" cx="14" cy="10.500" r="5"/><path vector-effect="non-scaling-stroke" d="M4.800 23.200c1.500-4.200 5-6.500 9.200-6.500s7.700 2.300 9.200 6.500"/></g></svg>
<!-- gear --><svg style="left:14.4px;top:768.2px" width="28.4" height="28.5" viewBox="0.16 0.16 27.68 27.68" preserveAspectRatio="none"><g fill="none" stroke="#8e8e88" stroke-width="1.7" stroke-linejoin="round"><path vector-effect="non-scaling-stroke" d="M11.76 4.66L11.77 0.99L16.23 0.99L16.24 4.66L19.02 5.82L21.62 3.22L24.78 6.38L22.18 8.98L23.34 11.76L27.01 11.77L27.01 16.23L23.34 16.24L22.18 19.02L24.78 21.62L21.62 24.78L19.02 22.18L16.24 23.34L16.23 27.01L11.77 27.01L11.76 23.34L8.98 22.18L6.38 24.78L3.22 21.62L5.82 19.02L4.66 16.24L0.99 16.23L0.99 11.77L4.66 11.76L5.82 8.98L3.22 6.38L6.38 3.22L8.98 5.82Z"/><circle vector-effect="non-scaling-stroke" cx="14" cy="14" r="3.600"/></g></svg>
<div class="bd" style="left:26px;top:143.700px;width:22px;height:19.300px;border-radius:9.700px;line-height:19.300px;font-size:11.800px">51</div>
<div class="bd" style="left:29.100px;top:783.300px;width:18.600px;height:18.600px;border-radius:50%;line-height:18.600px">1</div>

</div>

<div id="status">
<div class="abs" style="left:0;top:0;width:41px;height:27px;background:#ac6218"></div>
<svg class="abs" style="left:13px;top:7px" width="15" height="13" viewBox="0 0 15 13"><path d="M1.500 4l4.500 4-4.500 4M13.500 1 9 5l4.500 4" fill="none" stroke="#fff" stroke-width="1.300"/></svg>
<svg class="abs" style="left:51px;top:5px" width="14" height="17" viewBox="0 0 14 17"><g fill="none" stroke="#fff" stroke-width="1.200"><circle cx="3.500" cy="3" r="2"/><circle cx="3.500" cy="14" r="2"/><circle cx="11" cy="5" r="2"/><path d="M3.500 5v7M11 7c0 3-3 3.500-5.500 4.200-1.300.4-2 .6-2 1"/></g></svg>
<span style="left:71.200px;font-size:14.400px;letter-spacing:.48px">main*</span>
<svg class="abs" style="left:130px;top:7px" width="17" height="13" viewBox="0 0 17 13"><path d="M12.800 11.500h.7c1.500-.2 2.700-1.500 2.700-3.100 0-1.700-1.300-3-2.900-3.100C12.800 3 10.800 1.200 8.500 1.200S4.200 3 3.700 5.300C2.100 5.400.8 6.700.8 8.400c0 1.600 1.200 2.900 2.700 3.100h.7" fill="none" stroke="#fff" stroke-width="1.100"/><path d="M8.500 12.500V6.500M6 8.800l2.500-2.500L11 8.800" fill="none" stroke="#fff" stroke-width="1.100"/></svg>
<svg class="abs" style="left:165px;top:4px" width="16" height="19" viewBox="0 0 16 19"><g fill="none" stroke="#fff" stroke-width="1.100"><circle cx="5" cy="3" r="1.800"/><circle cx="12.500" cy="8.500" r="1.800"/><path d="M5 4.800v9M12.500 10.300c0 2.500-2.500 3-4.500 3.400"/><path d="M5 13.500l2.300 2.300L5 18.200l-2.300-2.400z"/></g></svg>
<svg class="abs" style="left:203px;top:6px" width="15" height="15" viewBox="0 0 15 15"><circle cx="7.500" cy="7.500" r="6.600" fill="none" stroke="#fff" stroke-width="1.100"/><path d="M5 5l5 5M10 5l-5 5" stroke="#fff" stroke-width="1.100"/></svg>
<span style="left:222px;font-size:14.400px">0</span>
<svg class="abs" style="left:237.500px;top:6px" width="15" height="14" viewBox="0 0 15 14"><path d="M7.500 1.200 14 13H1z" fill="none" stroke="#fff" stroke-width="1.100" stroke-linejoin="round"/><path d="M7.500 5.500v4M7.500 10.500v1.300" stroke="#fff" stroke-width="1.100"/></svg>
<span style="left:257px;font-size:14.400px">0</span>
<svg class="abs" style="left:286.500px;top:6px" width="13" height="15" viewBox="0 0 13 15"><g fill="none" stroke="#fff" stroke-width="1"><rect x=".5" y=".5" width="12" height="3.500"/><rect x=".5" y="5.700" width="12" height="3.500"/><rect x=".5" y="10.900" width="12" height="3.500"/></g><path d="M2 2.200h9M2 7.400h9M2 12.600h9" stroke="#fff" stroke-width="1.600" stroke-dasharray="1.200 .8"/></svg>
<span style="left:306px;font-size:14.400px;letter-spacing:.4px">Server not selected</span>
<span style="left:501.500px;font-size:14.400px">LF</span>
<span style="left:535.500px;font-size:13.500px;letter-spacing:1px;line-height:24px">{}</span>
<svg class="abs" style="left:543px;top:14px" width="7" height="7" viewBox="0 0 7 7"><circle cx="3.500" cy="3.500" r="2.400" fill="#414339" stroke="#fff" stroke-width="1"/><path d="M2.400 2.400l2.200 2.200M4.600 2.400 2.400 4.600" stroke="#fff" stroke-width=".8"/></svg>
<span style="left:558.700px;font-size:14.400px;letter-spacing:.1px">HTML</span>
<svg class="abs" style="left:620px;top:5px" width="15" height="17" viewBox="0 0 15 17"><g fill="none" stroke="#fff" stroke-width="1.100"><circle cx="7.500" cy="6.500" r="1.700"/><path d="M4.800 9.400a4 4 0 1 1 5.400 0M3.200 11.200a6.400 6.400 0 1 1 8.600 0M7.500 8.200v8"/></g></svg>
<span style="left:639.600px;font-size:14.400px">Go Live</span>
<svg class="abs" style="left:709px;top:8px" width="17" height="11" viewBox="0 0 17 11"><path d="M1 6.500 4 10 10.500 1M6.500 8.300 8 10l6.500-9" fill="none" stroke="#fff" stroke-width="1.100"/></svg>
<span style="left:730px;font-size:14.400px;letter-spacing:.4px">Prettier</span>
<span style="left:800.600px;font-size:14.400px;letter-spacing:.33px">Formatting:</span>
<svg class="abs" style="left:883px;top:8px" width="15" height="11" viewBox="0 0 15 11"><path d="M1 6l4 4.200L14 1" fill="none" stroke="#fff" stroke-width="1.200"/></svg>
<svg class="abs" style="left:918.500px;top:5px" width="17" height="17" viewBox="0 0 17 17"><g fill="none" stroke="#fff" stroke-width="1.100" stroke-linejoin="round"><path d="M6 4V1.500h10v7.300h-3l-2.200 2.200V8.800"/><circle cx="6" cy="8.300" r="2.700"/><path d="M.8 16.200c.5-3 2.600-4.700 5.200-4.700s4.700 1.700 5.200 4.700"/></g></svg>
<svg class="abs" style="left:954px;top:4px" width="17" height="19" viewBox="0 0 17 19"><path d="M8 2.200c-3 0-5 2.200-5 5v4.300l-1.800 2.700v.8h13.600v-.8L13 11.500V9" fill="none" stroke="#fff" stroke-width="1.100" stroke-linejoin="round"/><path d="M6.500 15.500c.2 1 .8 1.500 1.500 1.500s1.300-.5 1.500-1.500" fill="none" stroke="#fff" stroke-width="1.100"/><circle cx="12.500" cy="4.500" r="3" fill="#fff"/></svg>

</div>
<div class="frame"></div>
</div>

<!-- ================= FIREFOX ================= -->
<div class="abs" style="left:989px;top:34px;width:2px;height:854px;background:#050505"></div>
<div id="ff"><div id="ffi">
<style>
#ff .tlg{position:absolute;top:15.800px;width:12px;height:12px;border-radius:50%;background:#48474f}
#ff svg{position:absolute}
#page{position:absolute;left:-1px;top:85px;width:451px;height:469px;z-index:3;background:#fff;color:#000;overflow:hidden}
#page .shadow{position:absolute;left:0;top:0;width:52px;height:469px;background:linear-gradient(90deg,rgba(0,0,0,.27) 0,rgba(0,0,0,.17) 5px,rgba(0,0,0,.1) 12px,rgba(0,0,0,.055) 22px,rgba(0,0,0,.02) 36px,rgba(0,0,0,0) 50px)}
#page h2{position:absolute;left:51.500px;top:40px;margin:0;font-size:24px;line-height:28px;font-weight:700;white-space:pre;letter-spacing:0}
#page p{position:absolute;left:51.500px;margin:0;font-size:16px;line-height:18px;white-space:pre}
#page button{position:absolute;left:8px;top:417px;width:98px;height:22px;margin:0;padding:0;border:1px solid #8f8f9d;border-radius:4px;background:#e9e9ed;color:#000;font-family:"Liberation Sans",sans-serif;font-size:14.300px;line-height:21px;text-align:center}
#dt{position:absolute;left:0;top:552px;width:450px;height:324px;background:#232327}
#dt .tb{position:absolute;left:0;top:3px;width:450px;height:28px;background:#0c0c0d}
#dt .tbt{position:absolute;top:3px;height:28px;line-height:28px;font-size:12.6px;color:#b1b1b3;white-space:pre}
#dt .sr{position:absolute;left:0;top:31px;width:450px;height:27px;background:#232327;border-top:1px solid #3c3c41;border-bottom:1px solid #3c3c41}
#mk{position:absolute;left:0;top:58px;width:450px;height:209px;font-family:"Liberation Mono",monospace;font-size:11.04px;color:#b1b1b3;-webkit-text-stroke:.15px}
#mk div{position:absolute;left:0;height:16px;line-height:17.400px;white-space:pre}
#mk .t{color:#75bfff}#mk .a{color:#ff7de9}#mk .v{color:#b98eff}#mk .d{color:#939395;font-style:italic}#mk .l{color:#c8c8ca;font-weight:700;text-decoration:underline}#mk .m{color:#c8c8ca;font-weight:700}
#mk .sel{left:0;width:450px;background:#04508c}
#mk .badge{display:inline-block;height:11px;line-height:9px;border:1px solid #8f8f95;border-radius:3px;color:#d7d7db;padding:0 1.500px;vertical-align:1px;font-size:9.800px;letter-spacing:-.1px}
#mk .ell{display:inline-block;width:14px;height:10px;border:1px solid #8f8f95;border-radius:3px;vertical-align:-1px;margin:0 1.5px;position:relative}
#mk .ell:before{content:"";position:absolute;left:2.5px;top:3px;width:2px;height:2px;background:#d7d7db;box-shadow:3px 0 #d7d7db,6px 0 #d7d7db}
#dt .bcr{position:absolute;left:0;top:267.500px;width:450px;height:26px;border-top:1px solid #38383d;line-height:24px;font-size:11.800px}
#dt .sb{position:absolute;left:0;top:294px;width:450px;height:28px;background:#0c0c0d;border-top:1px solid #38383d}
#dt .sbt{position:absolute;top:293px;height:26px;line-height:26px;font-size:12.6px;color:#b1b1b3;white-space:pre}
</style>
<!-- tab strip -->
<div class="tlg" style="left:12px"></div><div class="tlg" style="left:32px"></div><div class="tlg" style="left:52px"></div>
<svg style="left:117px;top:14px;opacity:.85" width="16" height="16" viewBox="0 0 16 16"><defs><radialGradient id="fxg" cx=".78" cy=".12" r="1.050"><stop offset="0" stop-color="#ffe14a"/><stop offset=".3" stop-color="#ffa02e"/><stop offset=".62" stop-color="#ff4f3a"/><stop offset="1" stop-color="#d9148c"/></radialGradient><linearGradient id="fxp" x1="1" y1="0" x2="0" y2="1"><stop offset="0" stop-color="#a35cf0"/><stop offset="1" stop-color="#3f35c8"/></linearGradient></defs><path d="M8.700.2C9.500 1.600 11 2.300 12.600 3.700c2 1.700 3.200 3.800 3 6-.3 3.700-3.500 6.200-7.400 6.200-4.400 0-7.800-3.300-7.700-7.300C.5 6.400 1.200 4.600 2.300 3.400c0 .7.200 1.300.5 1.600.4-.8 1-1.300 1.800-1.700-.1.700.1 1.400.6 1.900.8-.6 1.800-.9 2.400-.9-.2-1.500.3-3 1.100-4.100z" fill="url(#fxg)"/><circle cx="8.100" cy="8.700" r="3.500" fill="url(#fxp)"/><path d="M4.500 7.800c.6-1.500 2-2.200 3.500-2 1 .1 1.600.5 2 1-1.200-.3-2.100.2-2.800.8-.7.600-1.800.6-2.700.2z" fill="#ff8f2a"/></svg>
<div class="abs" style="left:147px;top:0;width:1px;height:44px;background:#4a4a55"></div>
<div class="abs" style="left:152px;top:4px;width:215px;height:36px;border-radius:4px;background:#42414d"></div>
<svg style="left:160px;top:14px" width="16" height="17" viewBox="0 0 16 17"><path d="M8 .3.600 2.900l1.100 9.800L8 16.200l6.300-3.500 1.100-9.800z" fill="#0f0f12"/><path d="M8 .3v15.900l6.300-3.500 1.100-9.800z" fill="#1d1d22"/><path d="M8 2.100 3.400 12.400h1.700l.9-2.300h3.900l.9 2.300h1.700L8 2.100zm1.300 6.600H6.700L8 5.500l1.300 3.200z" fill="#fff"/></svg>
<span class="abs" style="left:182.200px;top:4px;height:36px;line-height:38.400px;font-size:11.400px;color:#fbfbfe;-webkit-text-stroke:.25px">Web</span>
<svg style="left:346px;top:17px" width="10" height="10" viewBox="0 0 10 10"><path d="M1 1l8 8M9 1 1 9" stroke="#e8e8ee" stroke-width="1" stroke-linecap="round"/></svg>
<svg style="left:382.500px;top:16.500px" width="12" height="12" viewBox="0 0 13 13"><path d="M6.500.5v12M.5 6.500h12" stroke="#b4b4be" stroke-width="1.100" stroke-linecap="round"/></svg>
<svg style="left:422.500px;top:18.500px" width="12.500" height="7.500" viewBox="0 0 13 8"><path d="M1 1l5.500 5.500L12 1" fill="none" stroke="#b4b4be" stroke-width="1.100" stroke-linecap="round" stroke-linejoin="round"/></svg>
<!-- nav bar -->
<div class="abs" style="left:0;top:44px;width:450px;height:41px;background:#2b2a33;border-bottom:1px solid #0f0f12"></div>
<svg style="left:16px;top:58px" width="15" height="13" viewBox="0 0 15 13"><path d="M14 6.500H1.500M6.500 1.200 1.200 6.500l5.300 5.300" fill="none" stroke="#8f8f9d" stroke-width="1.300" stroke-linecap="round" stroke-linejoin="round"/></svg>
<svg style="left:52px;top:58px" width="15" height="13" viewBox="0 0 15 13"><path d="M1 6.500h12.500M8.500 1.200l5.300 5.300-5.300 5.300" fill="none" stroke="#8f8f9d" stroke-width="1.300" stroke-linecap="round" stroke-linejoin="round"/></svg>
<svg style="left:88px;top:57px" width="15" height="15" viewBox="0 0 15 15"><path d="M13.300 7.500a5.800 5.800 0 1 1-1.900-4.300" fill="none" stroke="#8f8f9d" stroke-width="1.300" stroke-linecap="round"/><path d="M13.600 1v4.500H9.100z" fill="#8f8f9d"/></svg>
<div class="abs" style="left:118px;top:48px;width:216px;height:32px;border-radius:4px;background:#1c1b22"></div>
<svg style="left:127px;top:56px" width="15" height="16" viewBox="0 0 15 16"><path d="M7.500 1c1.900 1.300 3.900 1.800 6 1.800 0 5.900-1.700 10-6 12.200-4.300-2.200-6-6.300-6-12.200 2.100 0 4.100-.5 6-1.800z" fill="none" stroke="#fbfbfe" stroke-width="1.300" stroke-linejoin="round"/></svg>
<svg style="left:157px;top:57px" width="12" height="15" viewBox="0 0 12 15"><path d="M2.200.7h4.600l4.500 4.500v7.600c0 .8-.7 1.500-1.500 1.500H2.200c-.8 0-1.500-.7-1.500-1.500V2.200C.7 1.400 1.400.7 2.200.7z" fill="none" stroke="#fbfbfe" stroke-width="1.300" stroke-linejoin="round"/><path d="M6.600.9v3.200c0 .7.500 1.200 1.200 1.200H11" fill="none" stroke="#fbfbfe" stroke-width="1.300"/></svg>
<span class="abs" style="left:180px;top:48px;height:32px;line-height:35px;font-size:14.7px;color:#fbfbfe;white-space:pre;-webkit-text-stroke:.2px">localhost<span style="color:#a3a2ab;letter-spacing:.5px;-webkit-text-stroke:0">:4200</span></span>
<svg style="left:310px;top:56px" width="17" height="16" viewBox="0 0 17 16"><path d="M8.500 1.200l2.200 4.600 5 .7-3.600 3.500.9 5-4.500-2.400L4 15l.9-5L1.300 6.500l5-.7z" fill="none" stroke="#fbfbfe" stroke-width="1.300" stroke-linejoin="round"/></svg>
<svg style="left:346px;top:58px" width="15" height="13" viewBox="0 0 13 11"><path d="M1 1l4.500 4.500L1 10M7 1l4.500 4.500L7 10" fill="none" stroke="#a09fac" stroke-width="1.100" stroke-linecap="round" stroke-linejoin="round"/></svg>
<svg style="left:383px;top:56px" width="15" height="16" viewBox="0 0 15 16"><path d="M5.300 3.500V2.600a1.700 1.700 0 0 1 3.400 0v.9h3c.6 0 1 .4 1 1v8.900c0 .6-.4 1-1 1H2.300c-.6 0-1-.4-1-1v-3h1a1.700 1.700 0 0 0 0-3.400h-1V4.500c0-.6.4-1 1-1z" fill="none" stroke="#c4c3cf" stroke-width="1.100" stroke-linejoin="round"/></svg>
<svg style="left:418px;top:59px" width="14" height="11" viewBox="0 0 14 11"><path d="M.700 1h12.600M.700 5.500h12.600M.700 10h12.600" stroke="#c4c3cf" stroke-width="1.100" stroke-linecap="round"/></svg>
<!-- page -->
<div id="page">
  <div class="shadow"></div>
  <h2>Hello Angular with Typescript</h2>
  <p style="top:111px">This is my first component</p>
  <p style="top:171px;color:#0000ff">Set warna `blue` ke component</p>
  <svg style="left:120px;top:240px" width="170" height="185" viewBox="0 0 170 185"><path d="M12.9 27.1C14.6 26.6 18.6 24.8 22.6 24.0C26.6 23.3 32.0 22.4 37.0 22.6C42.0 22.8 47.3 23.7 52.4 25.1C57.6 26.4 61.5 27.0 67.8 30.8C74.2 34.7 83.9 41.1 90.4 48.3C97.0 55.5 102.6 65.6 106.9 74.0C111.2 82.4 114.1 91.5 116.1 98.7C118.1 105.9 118.4 114.1 118.8 117.2C117.5 116.0 115.4 113.2 111.0 110.0C106.6 106.7 99.7 101.2 92.5 97.6C85.3 94.0 75.4 91.1 67.8 88.4C60.3 85.6 53.4 84.3 47.3 81.2C41.1 78.1 35.6 74.9 30.8 69.9C26.0 64.9 21.4 57.2 18.5 51.4C15.6 45.6 14.3 39.0 13.4 34.9C12.4 30.9 13.0 28.4 12.9 27.1Z" fill="#f9683c"/><path d="M139.8 12.9C141.5 14.6 147.0 17.9 150.1 22.6C153.1 27.3 156.9 35.6 158.3 41.1C159.6 46.6 159.3 49.7 158.3 55.5C157.2 61.3 155.2 69.2 152.1 76.1C149.0 82.9 144.9 89.7 139.8 96.6C134.6 103.5 124.4 114.1 121.3 117.6C121.1 115.1 121.1 108.7 120.2 102.8C119.4 96.9 117.8 88.4 116.1 82.2C114.4 76.1 111.6 70.9 110.0 65.8C108.3 60.6 106.8 55.8 106.3 51.4C105.8 46.9 105.4 43.5 106.9 39.1C108.4 34.6 111.7 28.5 115.1 24.7C118.5 20.8 123.3 18.0 127.4 16.0C131.6 14.1 137.7 13.5 139.8 12.9Z" fill="#68c64a"/><path d="M92.5 100.7C94.9 102.3 102.5 106.6 106.9 110.0C111.3 113.3 116.8 119.0 118.8 120.9C118.5 123.0 118.8 128.7 117.2 133.6C115.5 138.5 113.1 144.9 108.9 150.1C104.8 155.2 98.0 161.0 92.5 164.4C87.0 167.9 80.5 169.2 76.1 170.6C71.6 172.0 67.5 172.3 65.8 172.7C65.7 170.6 64.9 165.5 65.4 160.3C65.9 155.2 66.9 148.0 68.9 141.8C70.8 135.7 74.2 128.6 77.1 123.3C80.0 118.0 83.8 113.7 86.3 110.0C88.9 106.2 91.5 102.3 92.5 100.7Z" fill="#187fc4"/></svg>
  <button>Klik button ini</button>
</div>
<!-- devtools -->
<div id="dt">
<div class="abs" style="left:0;top:0;width:450px;height:3px;background:#0c0c0d;border-top:1px solid #38383d"></div>
<div class="tb"></div>
<div class="abs" style="left:114px;top:3px;width:91px;height:2px;background:#0a84ff"></div>
<!-- picker -->
<svg style="left:7px;top:10px" width="17" height="15" viewBox="0 0 17 15"><path d="M6.500 12.300H2.600c-1 0-1.800-.8-1.800-1.800V2.600c0-1 .8-1.800 1.800-1.800h9.800c1 0 1.800.8 1.800 1.800v2.600" fill="none" stroke="#d7d7db" stroke-width="1.500" stroke-linecap="round"/><path d="M7.600 5.600l8 3.600-3.300 1.100 2.700 3.100-1.300 1.100-2.700-3.200-2 2.800z" fill="#d7d7db"/></svg>
<div class="abs" style="left:31px;top:8px;width:1px;height:19px;background:#38383d"></div>
<svg style="left:41px;top:10px" width="14" height="15" viewBox="0 0 14 15"><rect x=".8" y=".8" width="12.400" height="13.400" rx="2.200" fill="none" stroke="#d7d7db" stroke-width="1.500"/><path d="M.8 7.500h12.400" stroke="#d7d7db" stroke-width="1.400"/><path d="M5.200 4.300h3.600M5.200 10.900h3.600" stroke="#d7d7db" stroke-width="1.300" stroke-linecap="round"/></svg>
<span class="tbt" style="left:62px">Storage</span>
<svg style="left:123px;top:10px" width="15" height="15" viewBox="0 0 15 15"><rect x="2.800" y="2.800" width="9.400" height="9.400" rx="1.600" fill="none" stroke="#fff" stroke-width="1.700"/><path d="M7.500 0v3M7.500 12v3M0 7.500h3M12 7.500h3" stroke="#fff" stroke-width="1.700"/></svg>
<span class="tbt" style="left:144px;color:#fff;-webkit-text-stroke:.35px;letter-spacing:.2px">Inspector</span>
<svg style="left:214px;top:10px" width="16" height="14" viewBox="0 0 16 14"><rect x=".8" y=".8" width="14.400" height="12.400" rx="2.200" fill="none" stroke="#d7d7db" stroke-width="1.500"/><path d="M4.300 4.500 6.800 7l-2.500 2.500" fill="none" stroke="#d7d7db" stroke-width="1.300" stroke-linecap="round" stroke-linejoin="round"/></svg>
<span class="tbt" style="left:236px">Console</span>
<svg style="left:297px;top:12px" width="13" height="11" viewBox="0 0 13 11"><path d="M1 1l4.500 4.500L1 10M7 1l4.500 4.500L7 10" fill="none" stroke="#d7d7db" stroke-width="1.600" stroke-linecap="round" stroke-linejoin="round"/></svg>
<svg style="left:374px;top:9px" width="16" height="17" viewBox="0 0 16 17"><path d="M4.800 5.300V2.500c0-.9.700-1.600 1.600-1.600h6.800c.9 0 1.600.7 1.600 1.600v11c0 .9-.7 1.600-1.600 1.600H9.600" fill="none" stroke="#d7d7db" stroke-width="1.500"/><rect x=".8" y="5.400" width="6.400" height="9.800" rx="1.400" fill="none" stroke="#d7d7db" stroke-width="1.500"/></svg>
<svg style="left:400px;top:15px" width="16" height="4" viewBox="0 0 16 4"><circle cx="2" cy="2" r="1.800" fill="#c4c4c8"/><circle cx="8" cy="2" r="1.800" fill="#c4c4c8"/><circle cx="14" cy="2" r="1.800" fill="#c4c4c8"/></svg>
<svg style="left:428.500px;top:11.500px" width="11" height="11" viewBox="0 0 11 11"><path d="M1 1l9 9M10 1 1 10" stroke="#d7d7db" stroke-width="1.500" stroke-linecap="round"/></svg>
<!-- search row -->
<div class="sr"></div>
<svg style="left:7px;top:38px" width="12" height="12" viewBox="0 0 12 12"><circle cx="4.800" cy="4.800" r="3.700" fill="none" stroke="#8f8f95" stroke-width="1.400"/><path d="M7.600 7.600l3.600 3.600" stroke="#8f8f95" stroke-width="1.500" stroke-linecap="round"/></svg>
<span class="abs" style="left:23px;top:32px;height:26px;line-height:25px;font-size:11.200px;color:#7c7c81;white-space:pre">Search HTML</span>
<div class="abs" style="left:388px;top:36px;width:1px;height:16px;background:#48484d"></div>
<svg style="left:398.500px;top:38px" width="12" height="12" viewBox="0 0 12 12"><path d="M6 .5v11M.5 6h11" stroke="#d7d7db" stroke-width="1.500"/></svg>
<svg style="left:424.500px;top:37px" width="14" height="14" viewBox="0 0 14 14"><path d="M9 2.300l1.200-1.200c.7-.7 1.900-.7 2.600 0s.7 1.900 0 2.600L11.600 4.900l.7.700-1.200 1.200-4-4L8.300 1.600z" fill="#d7d7db"/><path d="M8.300 4.600 2.700 10.200 2 12l1.800-.7 5.600-5.600" fill="none" stroke="#d7d7db" stroke-width="1.200" stroke-linejoin="round"/></svg>
<!-- markup -->
<div id="mk">
<div class="sel" style="top:47px"></div>
<div class="abs" style="left:19px;top:65px;width:2px;height:123px;background:#10518e"></div>
<div style="top:-1px;left:16.3px"><span class="d">&lt;!DOCTYPE html&gt;</span></div>
<div style="top:15px;left:16.3px">&lt;<span class="t">html</span> <span class="a">lang</span>="<span class="v">en</span>"&gt; <span class="badge">event</span></div>
<div style="top:31px;left:27.3px;color:#939395">&lt;head&gt;<span class="ell"></span>&lt;/head&gt;</div>
<svg style="left:18.500px;top:35px" width="6" height="8" viewBox="0 0 6 8"><path d="M.5 0v8l5-4z" fill="#939395"/></svg>
<div style="top:47px;left:27.3px;color:#fff;font-weight:700">&lt;body&gt;</div>
<svg style="left:16px;top:52.5px" width="9" height="6" viewBox="0 0 9 6"><path d="M0 .5h9L4.500 6z" fill="#fff"/></svg>
<div style="top:63px;left:38.3px">&lt;<span class="t">app-root</span> <span class="a">_nghost-tbc-c17</span>="" <span class="a">ng-version</span>="<span class="v">15.1.2</span>"&gt;<span class="ell"></span>&lt;/<span class="t">app-</span></div>
<svg style="left:29.500px;top:67px" width="6" height="8" viewBox="0 0 6 8"><path d="M.5 0v8l5-4z" fill="#939395"/></svg>
<div style="top:77px;left:38.3px"><span class="t">root</span>&gt;</div>
<div style="top:93px;left:38.3px;color:#939395">&lt;script src="<span class="l">runtime.js</span>" type="<span class="m">module</span>"&gt;&lt;/script&gt;</div>
<div style="top:109px;left:38.3px;color:#939395">&lt;script src="<span class="l">polyfills.js</span>" type="<span class="m">module</span>"&gt;&lt;/script&gt;</div>
<div style="top:125px;left:38.3px;color:#939395">&lt;script src="<span class="l">styles.js</span>" defer=""&gt;&lt;/script&gt;</div>
<div style="top:141px;left:38.3px;color:#939395">&lt;script src="<span class="l">vendor.js</span>" type="<span class="m">module</span>"&gt;&lt;/script&gt;</div>
<div style="top:157px;left:38.3px;color:#939395">&lt;script src="<span class="l">main.js</span>" type="<span class="m">module</span>"&gt;&lt;/script&gt;</div>
<div style="top:173px;left:27.3px">&lt;/<span class="t">body</span>&gt;</div>
<div style="top:189px;left:16.3px">&lt;/<span class="t">html</span>&gt;</div>
</div>
<!-- breadcrumbs -->
<div class="bcr"><span class="abs" style="left:10px;color:#d7d7db">html</span><svg style="left:40px;top:8.500px" width="5" height="8" viewBox="0 0 5 8"><path d="M.7.700 4 4 .7 7.300" fill="none" stroke="#8f8f95" stroke-width="1.200"/></svg><span class="abs" style="left:52px;color:#75bfff">body</span></div>
<!-- sidebar tabs -->
<div class="sb"></div>
<div class="abs" style="left:27px;top:294px;width:54px;height:2px;background:#0a84ff"></div>
<svg style="left:7px;top:300px" width="15" height="12" viewBox="0 0 15 12"><rect x=".6" y=".6" width="13.800" height="10.800" rx="1" fill="none" stroke="#b1b1b3" stroke-width="1.200"/><path d="M9.800.6v10.800M11.900.6v10.800" stroke="#b1b1b3" stroke-width="1"/><path d="M7.200 3.200v5.600L3.300 6z" fill="#b1b1b3"/></svg>
<span class="sbt" style="left:38.400px;color:#fff;-webkit-text-stroke:.4px;letter-spacing:-.1px">Rules</span>
<span class="sbt" style="left:91px">Layout</span>
<span class="sbt" style="left:151px">Computed</span>
<span class="sbt" style="left:232px">Changes</span>
<span class="sbt" style="left:304px">Compatibility</span>
<span class="sbt" style="left:400px">Fonts</span>
<div class="abs" style="left:435px;top:295px;width:1px;height:27px;background:#38383d"></div>
<svg style="left:439px;top:304px" width="8" height="5" viewBox="0 0 8 5"><path d="M0 0h8L4 5z" fill="#d7d7db"/></svg>
<div class="abs" style="left:0;top:322px;width:450px;height:3px;background:#0a0a0c"></div>

</div>

</div><div class="frame"></div></div>
</body>
</html>
